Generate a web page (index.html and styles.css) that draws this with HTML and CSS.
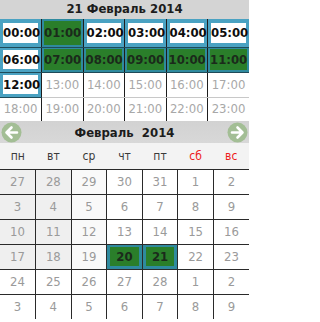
FILE: index.html
```html
<!DOCTYPE html>
<html lang="ru">
<head>
<meta charset="utf-8">
<title>Календарь</title>
<link rel="stylesheet" href="styles.css">
</head>
<body>
<div class="picker">
  <div class="title">21 Февраль 2014</div>
  <table class="times">
    <tr class="r1">
      <td class="sel"><span>00:00</span></td>
      <td class="on"><span>01:00</span></td>
      <td class="sel"><span>02:00</span></td>
      <td class="sel"><span>03:00</span></td>
      <td class="sel"><span>04:00</span></td>
      <td class="sel"><span>05:00</span></td>
    </tr>
    <tr class="r2">
      <td class="sel"><span>06:00</span></td>
      <td class="on"><span>07:00</span></td>
      <td class="on"><span>08:00</span></td>
      <td class="on"><span>09:00</span></td>
      <td class="on"><span>10:00</span></td>
      <td class="on"><span>11:00</span></td>
    </tr>
    <tr class="r3">
      <td class="sel"><span>12:00</span></td>
      <td>13:00</td>
      <td>14:00</td>
      <td>15:00</td>
      <td>16:00</td>
      <td>17:00</td>
    </tr>
    <tr class="r4">
      <td>18:00</td>
      <td>19:00</td>
      <td>20:00</td>
      <td>21:00</td>
      <td>22:00</td>
      <td>23:00</td>
    </tr>
  </table>
  <div class="cal-head">
    <span class="nav">
      <svg width="21" height="21" viewBox="0 0 21 21"><circle cx="10.5" cy="10.5" r="10" fill="#a3be95"/><path d="M16 10.5H6M10.5 5.5L5.5 10.5L10.5 15.5" fill="none" stroke="#fff" stroke-width="2.6" stroke-linecap="round" stroke-linejoin="round"/></svg>
    </span>
    <span class="month">Февраль&nbsp;&nbsp;2014</span>
    <span class="nav">
      <svg width="21" height="21" viewBox="0 0 21 21"><circle cx="10.5" cy="10.5" r="10" fill="#a3be95"/><path d="M5 10.5H15M10.5 5.5L15.5 10.5L10.5 15.5" fill="none" stroke="#fff" stroke-width="2.6" stroke-linecap="round" stroke-linejoin="round"/></svg>
    </span>
  </div>
  <table class="days">
    <tr class="wd">
      <th>пн</th><th>вт</th><th>ср</th><th>чт</th><th>пт</th><th class="we">сб</th><th class="we">вс</th>
    </tr>
    <tr>
      <td class="g">27</td><td class="g">28</td><td class="f">29</td><td>30</td><td>31</td><td>1</td><td>2</td>
    </tr>
    <tr>
      <td class="g">3</td><td class="g">4</td><td class="f">5</td><td>6</td><td>7</td><td>8</td><td>9</td>
    </tr>
    <tr>
      <td class="g">10</td><td class="g">11</td><td class="f">12</td><td>13</td><td>14</td><td>15</td><td>16</td>
    </tr>
    <tr>
      <td class="g">17</td><td class="g">18</td><td class="f">19</td><td class="on"><span>20</span></td><td class="on"><span>21</span></td><td>22</td><td>23</td>
    </tr>
    <tr>
      <td>24</td><td>25</td><td>26</td><td>27</td><td>28</td><td>1</td><td>2</td>
    </tr>
    <tr>
      <td>3</td><td>4</td><td>5</td><td>6</td><td>7</td><td>8</td><td>9</td>
    </tr>
  </table>
</div>
</body>
</html>
```

FILE: styles.css
```css
html, body {
  margin: 0;
  padding: 0;
  background: #ffffff;
}

.picker {
  width: 249px;
  font-family: "DejaVu Sans Condensed", "Liberation Sans", sans-serif;
  font-stretch: condensed;
  overflow: hidden;
}

.title {
  height: 19px;
  line-height: 18px;
  background: #d4d4d4;
  text-align: center;
  font-weight: bold;
  font-size: 13px;
  color: #1c1c1c;
}

.times {
  width: 100%;
  border-collapse: collapse;
  table-layout: fixed;
}

.times tr.r1 { height: 28px; }
.times tr.r2 { height: 25px; }
.times tr.r3 { height: 25px; }
.times tr.r4 { height: 24px; }

.times td {
  padding: 0;
  text-align: center;
  font-size: 13px;
  line-height: 16px;
  color: #a8a8a8;
  border-left: 1px solid #1e1e1e;
  border-bottom: 1px solid #c8c8c8;
}

.times tr.r4 td {
  border-bottom: none;
}

.times td:first-child {
  border-left: none;
}

.times td.sel {
  background: #4aa2c2;
  padding: 2px 3px;
  border-bottom: 1px solid #1f4a58;
}

.times td.sel span {
  display: block;
  background: #ffffff;
  color: #0e0e0e;
  font-weight: bold;
  line-height: 19px;
}

.times td.on {
  background: #2f8a9e;
  padding: 1px 2px;
  border-bottom: 1px solid #1f4a58;
}

.times td.on span {
  display: block;
  background: #2a7e2a;
  color: #1b2a1b;
  font-weight: bold;
  line-height: 21px;
}

.times tr.r1 td.on span {
  line-height: 24px;
}

.times tr.r1 td.sel span {
  line-height: 20px;
}

.cal-head {
  display: flex;
  align-items: center;
  justify-content: space-between;
  height: 22px;
  padding: 0 1px;
  background: linear-gradient(#d2d2d2, #d8d8d8);
}

.nav {
  display: flex;
  width: 21px;
  height: 21px;
}

.month {
  font-weight: bold;
  font-size: 13px;
  color: #1c1c1c;
}

.days {
  width: 100%;
  border-collapse: collapse;
  table-layout: fixed;
}

.days tr { height: 25px; }
.days tr.wd { height: 26px; }

.days th {
  padding: 0;
  font-weight: normal;
  font-size: 12px;
  line-height: 16px;
  color: #3a3a3a;
  background: #f3f3f3;
  border-bottom: 1px solid #2a2a2a;
}

.days th.we {
  color: #ee1c1c;
}

.days td {
  padding: 0;
  text-align: center;
  font-size: 13px;
  line-height: 16px;
  color: #9a9a9a;
  border: 1px solid #2a2a2a;
}

.days td:first-child {
  border-left: none;
}

.days td:last-child {
  border-right: none;
}

.days tr:last-child td {
  border-bottom: none;
}

.days td.g {
  background: #efefef;
}

.days td.f {
  background: #f9f9f9;
}

.days td.on {
  background: #2f8a9e;
  padding: 2px 3px;
}

.days td.on span {
  display: block;
  background: #2a7e2a;
  color: #1b2a1b;
  font-weight: bold;
  line-height: 19px;
}
```
